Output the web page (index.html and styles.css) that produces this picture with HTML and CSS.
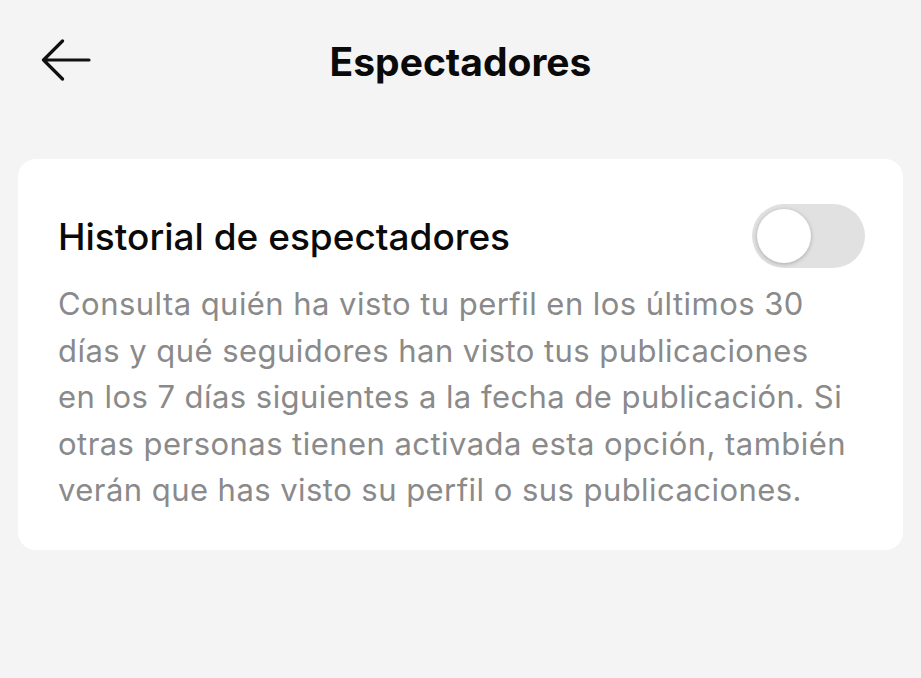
FILE: index.html
```html
<!DOCTYPE html>
<html lang="es">

<head>
    <meta charset="UTF-8">
    <meta name="viewport" content="width=device-width, initial-scale=1.0">
    <title>Espectadores</title>
    <link rel="stylesheet" href="styles.css">
</head>

<body>
    <header class="top-bar">
        <a href="#" class="back-btn" aria-label="Atrás">
            <svg width="50" height="42" viewBox="0 0 50 42">
                <path d="M48 21H2.5M21.5 2L2.5 21L21.5 40" fill="none" stroke="#111" stroke-width="3.2" stroke-linecap="round" stroke-linejoin="round" />
            </svg>
        </a>
        <h1 class="page-title">Espectadores</h1>
    </header>

    <section class="card">
        <div class="card-head">
            <h2 class="card-title">Historial de espectadores</h2>
            <label class="switch">
                <input type="checkbox">
                <span class="knob"></span>
            </label>
        </div>
        <p class="card-text">Consulta quién ha visto tu perfil en los últimos 30<br>
            días y qué seguidores han visto tus publicaciones<br>
            en los 7 días siguientes a la fecha de publicación. Si<br>
            otras personas tienen activada esta opción, también<br>
            verán que has visto su perfil o sus publicaciones.</p>
    </section>
</body>

</html>
```

FILE: styles.css
```css
body {
    font-family: Inter, Roboto, "Liberation Sans", Arial, sans-serif;
    margin: 0;
    padding: 0 18px;
    background-color: #f4f4f4;
    color: #111111;
}

.top-bar {
    position: relative;
    display: flex;
    align-items: center;
    justify-content: center;
    height: 122px;
}

.back-btn {
    position: absolute;
    left: 23px;
    top: 39px;
    display: block;
}

.page-title {
    margin: 0;
    font-size: 39px;
    font-weight: 700;
    color: #0a0a0a;
}

.card {
    margin-top: 37px;
    background-color: #ffffff;
    border-radius: 18px;
    padding: 45px 38px 36px 40px;
}

.card-head {
    display: flex;
    align-items: center;
    justify-content: space-between;
}

.card-title {
    margin: 0;
    font-size: 37px;
    font-weight: 500;
    color: #0a0a0a;
}

.switch {
    position: relative;
    width: 113px;
    height: 64px;
    border-radius: 32px;
    background-color: #e1e1e1;
    cursor: pointer;
}

.switch input {
    display: none;
}

.knob {
    position: absolute;
    left: 5px;
    top: 5px;
    width: 54px;
    height: 54px;
    border-radius: 50%;
    background-color: #ffffff;
    box-shadow: 0 1px 4px rgba(0, 0, 0, 0.25);
}

.card-text {
    margin: 13px 0 0;
    font-size: 31px;
    line-height: 46.5px;
    letter-spacing: 0.45px;
    color: #8a8a8a;
}
```
